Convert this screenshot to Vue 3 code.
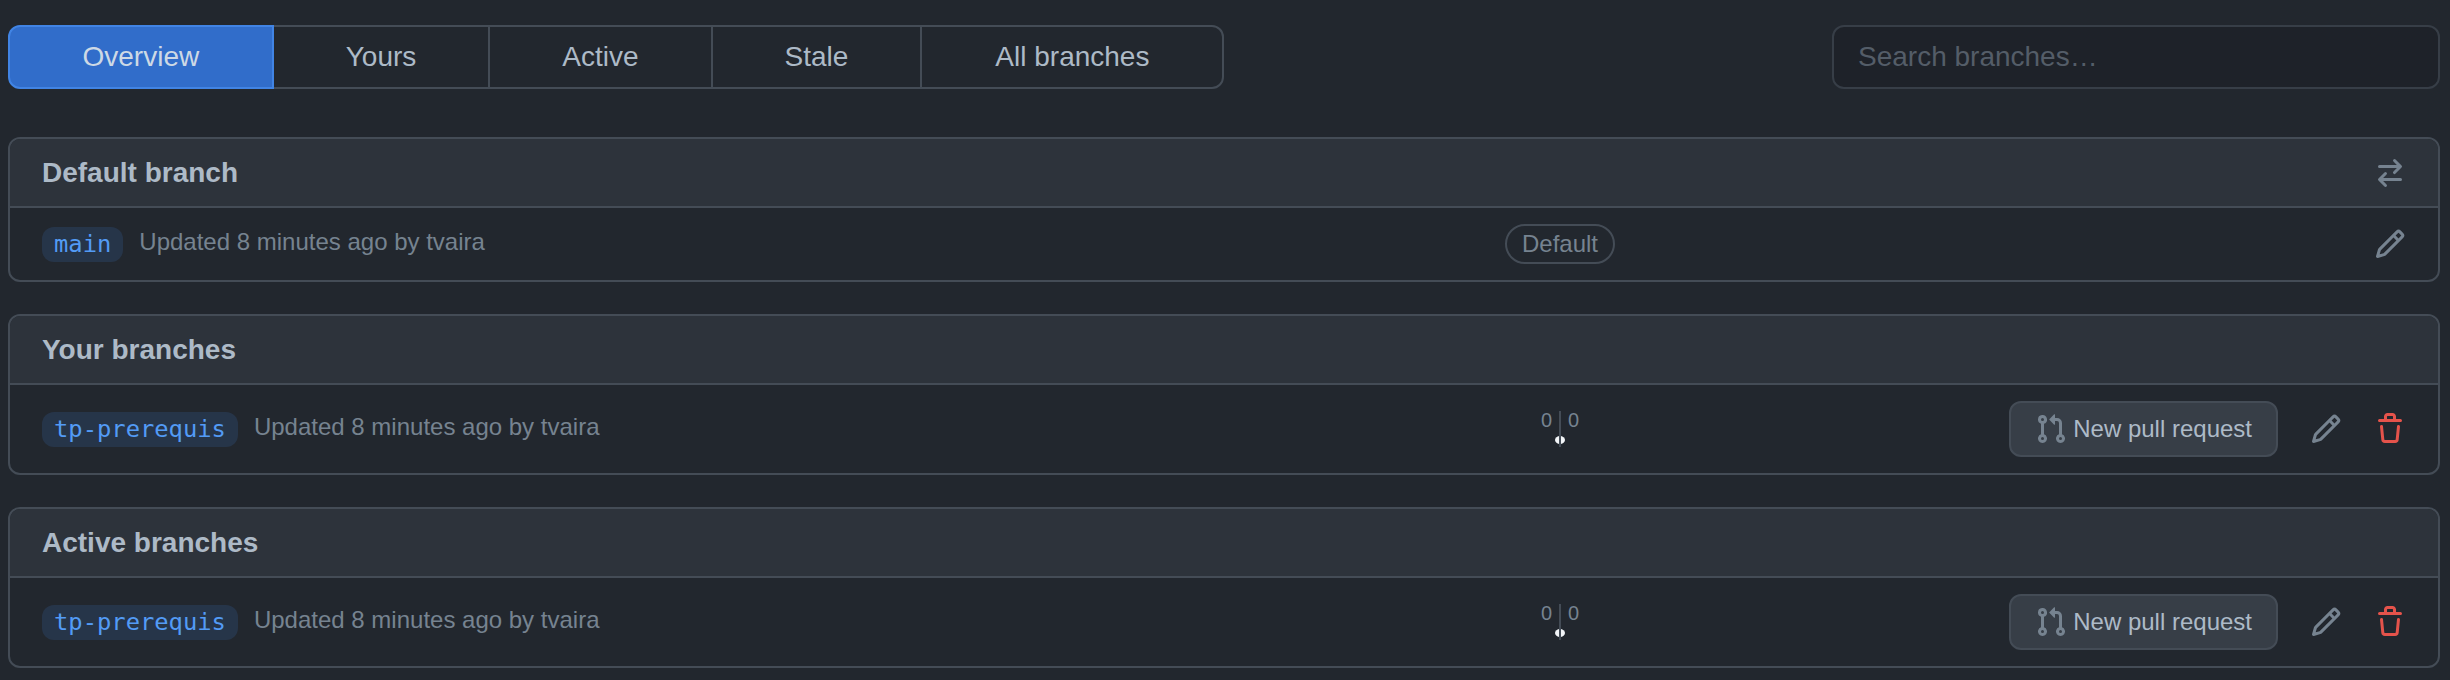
<template>
  <div class="page">
    <div class="toolbar">
      <nav class="tabs">
        <a v-for="tab in tabs" :key="tab" class="tab" :class="{ selected: tab === 'Overview' }">{{ tab }}</a>
      </nav>
      <input class="search" type="text" placeholder="Search branches…" />
    </div>

    <section class="box">
      <div class="box-header">
        <h3>Default branch</h3>
        <svg class="icon muted" viewBox="0 0 16 16" width="32" height="32"><path :d="icons.swap" /></svg>
      </div>
      <div class="row row-default">
        <div class="info">
          <code class="branch">main</code>
          <span class="updated">Updated 8 minutes ago by tvaira</span>
        </div>
        <span class="label">Default</span>
        <div class="actions">
          <svg class="icon muted" viewBox="0 0 16 16" width="32" height="32"><path :d="icons.pencil" /></svg>
        </div>
      </div>
    </section>

    <section v-for="group in groups" :key="group" class="box">
      <div class="box-header">
        <h3>{{ group }}</h3>
      </div>
      <div class="row">
        <div class="info">
          <code class="branch">tp-prerequis</code>
          <span class="updated">Updated 8 minutes ago by tvaira</span>
        </div>
        <div class="diverge">
          <div class="counts"><span>0</span><span>0</span></div>
          <i class="dot"></i>
        </div>
        <div class="actions">
          <button class="btn">
            <svg class="icon muted" viewBox="0 0 16 16" width="32" height="32"><path :d="icons.pull" /></svg>
            New pull request
          </button>
          <svg class="icon muted" viewBox="0 0 16 16" width="32" height="32"><path :d="icons.pencil" /></svg>
          <svg class="icon danger" viewBox="0 0 16 16" width="32" height="32"><path :d="icons.trash" /></svg>
        </div>
      </div>
    </section>
  </div>
</template>

<script setup>
const tabs = ['Overview', 'Yours', 'Active', 'Stale', 'All branches']
const groups = ['Your branches', 'Active branches']

const icons = {
  swap: 'M5.22 14.78a.75.75 0 0 0 1.06-1.06L4.56 12h8.69a.75.75 0 0 0 0-1.5H4.56l1.72-1.72a.75.75 0 0 0-1.06-1.06l-3 3a.75.75 0 0 0 0 1.06l3 3Zm5.56-6.5a.75.75 0 1 1-1.06-1.06l1.72-1.72H2.75a.75.75 0 0 1 0-1.5h8.69L9.72 2.28a.75.75 0 0 1 1.06-1.06l3 3a.75.75 0 0 1 0 1.06l-3 3Z',
  pencil: 'M11.013 1.427a1.75 1.75 0 012.474 0l1.086 1.086a1.75 1.75 0 010 2.474l-8.61 8.61c-.21.21-.47.364-.756.445l-3.251.93a.75.75 0 01-.927-.928l.929-3.25a1.75 1.75 0 01.445-.758l8.61-8.61zm1.414 1.06a.25.25 0 00-.354 0L10.811 3.75l1.439 1.44 1.263-1.263a.25.25 0 000-.354l-1.086-1.086zM11.189 6.25L9.75 4.81l-6.286 6.287a.25.25 0 00-.064.108l-.558 1.953 1.953-.558a.249.249 0 00.108-.064l6.286-6.286z',
  pull: 'M1.5 3.25a2.25 2.25 0 1 1 3 2.122v5.256a2.251 2.251 0 1 1-1.5 0V5.372A2.25 2.25 0 0 1 1.5 3.25Zm5.677-.177L9.573.677A.25.25 0 0 1 10 .854V2.5h1A2.5 2.5 0 0 1 13.5 5v5.628a2.251 2.251 0 1 1-1.5 0V5a1 1 0 0 0-1-1h-1v1.646a.25.25 0 0 1-.427.177L7.177 3.427a.25.25 0 0 1 0-.354ZM3.75 2.5a.75.75 0 1 0 0 1.5.75.75 0 0 0 0-1.5Zm0 9.5a.75.75 0 1 0 0 1.5.75.75 0 0 0 0-1.5Zm8.25.75a.75.75 0 1 0 1.5 0 .75.75 0 0 0-1.5 0Z',
  trash: 'M11 1.75V3h2.25a.75.75 0 0 1 0 1.5H2.75a.75.75 0 0 1 0-1.5H5V1.75C5 .784 5.784 0 6.75 0h2.5C10.216 0 11 .784 11 1.75ZM4.496 6.675l.66 6.6a.25.25 0 0 0 .249.225h5.19a.25.25 0 0 0 .249-.225l.66-6.6a.75.75 0 0 1 1.492.149l-.66 6.6A1.748 1.748 0 0 1 10.595 15h-5.19a1.75 1.75 0 0 1-1.741-1.575l-.66-6.6a.75.75 0 1 1 1.492-.15ZM6.5 1.75V3h3V1.75a.25.25 0 0 0-.25-.25h-2.5a.25.25 0 0 0-.25.25Z'
}
</script>

<style>
html,
body {
  background: #22272e;
  overflow: hidden;
}
</style>

<style scoped>
.page {
  height: 680px;
  box-sizing: border-box;
  padding: 25px 10px 0 8px;
  background: #22272e;
  color: #adbac7;
  font-family: "Liberation Sans", Arial, sans-serif;
  font-size: 28px;
}

.toolbar {
  display: flex;
  justify-content: space-between;
  margin-bottom: 48px;
}

.tabs {
  display: flex;
  height: 64px;
}

.tab {
  display: flex;
  align-items: center;
  padding: 0 72px;
  border: 2px solid #444c56;
  margin-left: -2px;
  color: #adbac7;
}

.tab:first-child {
  margin-left: 0;
  padding: 0 72.5px;
  border-radius: 12px 0 0 12px;
}

.tab:last-child {
  padding: 0 73px;
  border-radius: 0 12px 12px 0;
}

.tab.selected {
  position: relative;
  background: #316dca;
  border-color: #4184e4;
  color: #cdd9e5;
}

.search {
  width: 608px;
  height: 64px;
  box-sizing: border-box;
  padding: 0 24px;
  background: #1e2229;
  border: 2px solid #373e47;
  border-radius: 12px;
  color: #adbac7;
  font: inherit;
  outline: none;
}

.search::placeholder {
  color: #545d68;
  opacity: 1;
}

.box {
  border: 2px solid #444c56;
  border-radius: 12px;
  margin-bottom: 32px;
  overflow: hidden;
}

.box-header {
  display: flex;
  align-items: center;
  justify-content: space-between;
  height: 67px;
  padding: 0 32px;
  background: #2d333b;
  border-bottom: 2px solid #444c56;
}

.box-header h3 {
  margin: 0;
  font-size: 28px;
  font-weight: 600;
}

.row {
  display: grid;
  grid-template-columns: 1458px 120px 1fr;
  align-items: center;
  height: 88px;
  padding: 0 32px;
}

.row-default {
  height: 72px;
}

.info {
  display: flex;
  align-items: center;
  gap: 16px;
}

.branch {
  height: 35px;
  padding: 0 12px;
  border-radius: 12px;
  background: rgba(65, 132, 228, 0.15);
  color: #539bf5;
  font-family: "DejaVu Sans Mono", monospace;
  font-size: 23.8px;
  line-height: 35px;
}

.updated {
  margin-bottom: 5px;
  color: #768390;
  font-size: 24px;
}

.label {
  justify-self: center;
  padding: 0 14.5px;
  border: 2px solid #444c56;
  border-radius: 40px;
  color: #768390;
  font-size: 24px;
  line-height: 36px;
}

.diverge {
  display: flex;
  flex-direction: column;
  align-items: center;
  position: relative;
}

.diverge::after {
  content: "";
  position: absolute;
  top: 0;
  bottom: 0;
  left: 50%;
  width: 2px;
  margin-left: -1px;
  background: #444c56;
}

.counts {
  display: flex;
  gap: 16px;
  color: #768390;
  font-size: 20px;
  line-height: 18px;
}

.dot {
  width: 10px;
  height: 8px;
  margin: 7px 0 3px;
  border-radius: 50%;
  background: #f2f5f8;
}

.actions {
  display: flex;
  align-items: center;
  justify-content: flex-end;
  gap: 32px;
}

.btn {
  display: flex;
  align-items: center;
  gap: 6px;
  height: 56px;
  padding: 0 24px;
  background: #373e47;
  border: 2px solid #444c56;
  border-radius: 12px;
  color: #adbac7;
  font-family: inherit;
  font-size: 24px;
}

.icon {
  display: block;
  flex: none;
  fill: currentColor;
}

.muted {
  color: #768390;
}

.danger {
  color: #e5534b;
}
</style>
